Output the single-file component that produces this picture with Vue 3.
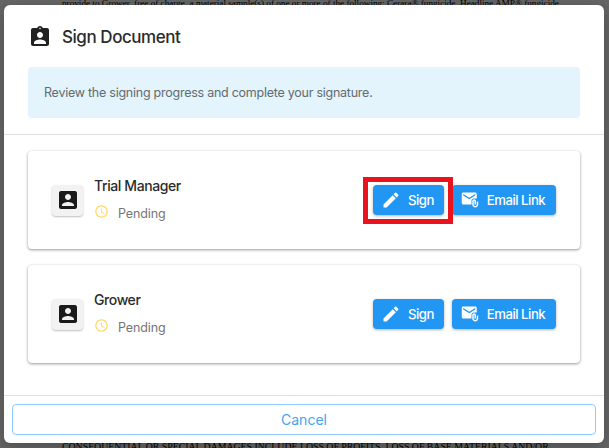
<template>
  <div class="page">
    <div class="doc">
      <p class="doc-top">provide to Grower, free of charge, a material sample(s) of one or more of the following: Cerara® fungicide, Headline AMP® fungicide</p>
      <p class="doc-bottom">CONSEQUENTIAL OR SPECIAL DAMAGES INCLUDE LOSS OF PROFITS, LOSS OF BASE MATERIALS AND/OR</p>
    </div>
    <div class="overlay">
      <div class="dialog">
        <div class="dialog-head">
          <div class="title-row">
            <svg class="title-icon" viewBox="0 0 24 24"><path :d="icons.badge" /></svg>
            <span class="title">Sign Document</span>
          </div>
          <div class="info">Review the signing progress and complete your signature.</div>
        </div>
        <div class="dialog-body">
          <div v-for="s in signers" :key="s" class="card">
            <div class="avatar">
              <svg viewBox="0 0 24 24"><path :d="icons.person" /></svg>
            </div>
            <div class="who">
              <div class="name">{{ s }}</div>
              <div class="status">
                <svg viewBox="0 0 24 24"><path :d="icons.clock" /></svg>
                <span>Pending</span>
              </div>
            </div>
            <div class="actions">
              <span :class="['sign-wrap', { marked: s === 'Trial Manager' }]">
                <button class="btn btn-sign">
                  <svg viewBox="0 0 24 24"><path :d="icons.pencil" /></svg>
                  Sign
                </button>
              </span>
              <button class="btn btn-mail">
                <svg viewBox="0 0 24 24"><path :d="icons.mail" /></svg>
                Email Link
              </button>
            </div>
          </div>
        </div>
        <div class="dialog-foot">
          <button class="cancel">Cancel</button>
        </div>
      </div>
    </div>
  </div>
</template>

<script setup>
const signers = ['Trial Manager', 'Grower']

const icons = {
  badge: 'M19 3h-4.18C14.4 1.84 13.3 1 12 1s-2.4.84-2.82 2H5c-1.1 0-2 .9-2 2v14c0 1.1.9 2 2 2h14c1.1 0 2-.9 2-2V5c0-1.1-.9-2-2-2zm-7-.25c.22 0 .41.1.55.25.12.13.2.31.2.5 0 .41-.34.75-.75.75s-.75-.34-.75-.75c0-.19.08-.37.2-.5.14-.15.33-.25.55-.25zM12 7c1.66 0 3 1.34 3 3s-1.34 3-3 3-3-1.34-3-3 1.34-3 3-3zm6 12H6v-1.4c0-2 4-3.1 6-3.1s6 1.1 6 3.1V19z',
  person: 'M3 5v14c0 1.1.89 2 2 2h14c1.1 0 2-.9 2-2V5c0-1.1-.9-2-2-2H5c-1.11 0-2 .9-2 2zm12 4c0 1.66-1.34 3-3 3s-3-1.34-3-3 1.34-3 3-3 3 1.34 3 3zm-9 8c0-2 4-3.1 6-3.1s6 1.1 6 3.1v1H6v-1z',
  clock: 'M11.99 2C6.47 2 2 6.48 2 12s4.47 10 9.99 10C17.52 22 22 17.52 22 12S17.52 2 11.99 2zM12 20c-4.42 0-8-3.58-8-8s3.58-8 8-8 8 3.58 8 8-3.58 8-8 8zm.5-13H11v6l5.25 3.15.75-1.23-4.5-2.67z',
  pencil: 'M3 17.25V21h3.75L17.81 9.94l-3.75-3.75L3 17.25zM20.71 7.04c.39-.39.39-1.02 0-1.41l-2.34-2.34c-.39-.39-1.02-.39-1.41 0l-1.83 1.83 3.75 3.75 1.83-1.83z',
  mail: 'M21 10V4c0-1.1-.9-2-2-2H3c-1.1 0-1.99.9-1.99 2L1 16c0 1.1.9 2 2 2h11v-5c0-1.66 1.34-3 3-3h4zm-10 1L3 6V4l8 5 8-5v2l-8 5zM21 14v4c0 1.1-.9 2-2 2s-2-.9-2-2v-4.5c0-.28.22-.5.5-.5s.5.22.5.5V18h2v-4.5c0-1.38-1.12-2.5-2.5-2.5S15 12.12 15 13.5V18c0 2.21 1.79 4 4 4s4-1.79 4-4v-4h-2z'
}
</script>

<style>
html, body { margin: 0; overflow: hidden; }
</style>

<style scoped>
.page {
  position: relative;
  width: 609px; height: 448px;
  overflow: hidden;
  background: #fff;
  font-family: Inter, "Noto Sans", sans-serif;
}
.doc {
  position: absolute; inset: 0;
  display: flex; flex-direction: column; justify-content: space-between;
  padding: 0 62px;
  font: 9.2px/12px "Liberation Serif", serif;
  color: #000;
  white-space: nowrap;
}
.doc p { margin: 0; }
.doc-top { margin-top: -3px !important; }
.doc-bottom { margin-bottom: -5px !important; font-size: 9.8px; }
.overlay {
  position: absolute; inset: 0;
  background: rgba(0,0,0,0.6);
  display: flex; align-items: flex-start; justify-content: flex-start;
  padding: 5px 0 0 4px;
}
.dialog {
  width: 600px; height: 438px;
  background: #fff;
  border-radius: 6px;
  display: flex; flex-direction: column;
  box-shadow: 0 4px 16px rgba(0,0,0,0.25);
}
.dialog-head {
  padding: 20px 24px 16px;
  border-bottom: 1px solid #e0e0e0;
}
.title-row {
  display: flex; align-items: center; gap: 10px;
  height: 24px;
  margin-bottom: 18px;
}
.title-icon { width: 24px; height: 24px; fill: #212121; }
.title { font-size: 17px; font-weight: 500; color: #2b2b2b; letter-spacing: -0.45px; }
.info {
  height: 51px;
  display: flex; align-items: center;
  padding: 0 16px;
  background: #e3f4fc;
  border-radius: 4px;
  font-size: 12.5px; color: #636b70;
  letter-spacing: -0.25px;
}
.dialog-body {
  flex: 1;
  padding: 16px 24px 0;
  display: flex; flex-direction: column; gap: 16px;
}
.card {
  height: 98px;
  box-sizing: border-box;
  padding: 0 24px;
  display: flex; align-items: center;
  background: #fff;
  border-radius: 4px;
  box-shadow: 0 1px 3px rgba(0,0,0,0.4), 0 0 2px rgba(0,0,0,0.06);
}
.avatar {
  width: 31px; height: 31px;
  display: flex; align-items: center; justify-content: center;
  background: #f2f2f2;
  border-radius: 4px;
  box-shadow: 0 1px 2px rgba(0,0,0,0.25);
  margin-right: 11px;
}
.avatar svg { width: 24px; height: 24px; fill: #1a1a1a; }
.who { flex: 1; }
.name {
  font-size: 14px; font-weight: 500; color: #2b2b2b;
  letter-spacing: -0.4px;
  margin-bottom: 10px;
  margin-top: -5px;
}
.status {
  display: flex; align-items: center; gap: 9px;
  font-size: 12.5px; color: #757575;
  letter-spacing: -0.1px;
}
.status svg { width: 15px; height: 15px; fill: #ffd666; }
.status span { position: relative; top: 2px; }
.actions { display: flex; align-items: center; gap: 8px; }
.sign-wrap { display: block; position: relative; }
.sign-wrap.marked::after {
  content: "";
  position: absolute;
  inset: -8px -9px -9px -10px;
  border: 5px solid #e8131c;
  pointer-events: none;
}
.btn {
  display: flex; align-items: center; justify-content: center;
  height: 30px;
  border: none;
  border-radius: 4px;
  background: #2196f3;
  color: #fff;
  font: 500 13.2px Inter, "Noto Sans", sans-serif;
  letter-spacing: -0.5px;
  box-shadow: 0 1px 3px rgba(0,0,0,0.3);
}
.btn svg { fill: #fff; flex: none; width: 20px; height: 20px; }
.btn-sign { width: 71px; gap: 7px; padding: 0 6px 0 4px; }
.btn-mail { width: 104px; gap: 8px; padding: 0 6px 0 4px; }
.btn-mail svg { width: 18px; height: 18px; }
.dialog-foot {
  height: 48px;
  box-sizing: border-box;
  border-top: 1px solid #e0e0e0;
  padding: 8px 8px 9px;
}
.cancel {
  display: block;
  width: 100%; height: 31px;
  background: #fff;
  border: 1px solid #90caf9;
  border-radius: 4px;
  color: #42a5f5;
  font: 400 14px Inter, "Noto Sans", sans-serif;
}
</style>
